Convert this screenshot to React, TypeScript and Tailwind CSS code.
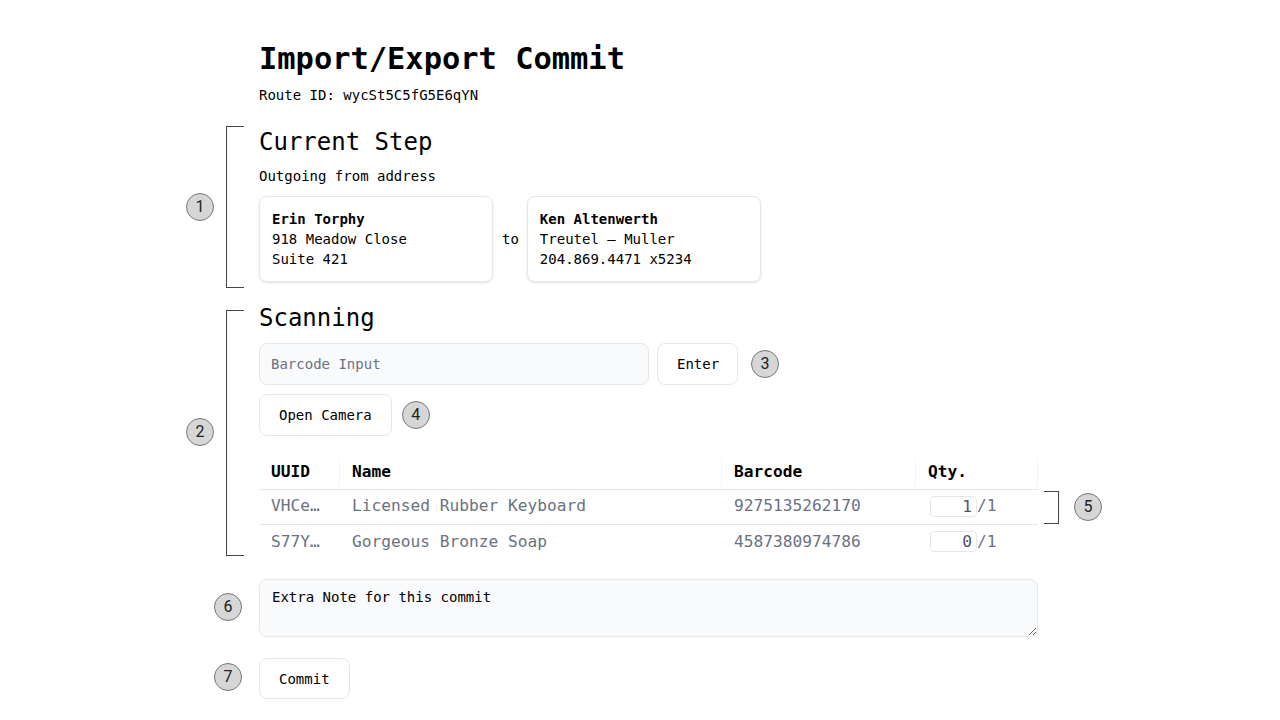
import React from "react";

const mono = { fontFamily: '"DejaVu Sans Mono", "Liberation Mono", monospace' };

const Badge = ({ n, className = "" }: { n: number; className?: string }) => (
  <div
    className={`shrink-0 w-[28px] h-[28px] rounded-full bg-[#d6d6d6] border border-[#777] flex items-center justify-center text-[16px] text-[#222] ${className}`}
    style={{ fontFamily: "Roboto, 'Liberation Sans', sans-serif" }}
  >
    {n}
  </div>
);

const Bracket = ({ className }: { className: string }) => (
  <div
    className={`absolute w-[18px] border-l-[1.5px] border-t-[1.5px] border-b-[1.5px] border-[#444] ${className}`}
  />
);

const rows = [
  { uuid: "VHCe…", name: "Licensed Rubber Keyboard", barcode: "9275135262170", qty: 1 },
  { uuid: "S77Y…", name: "Gorgeous Bronze Soap", barcode: "4587380974786", qty: 0 },
];

const cols = [
  { label: "UUID", w: "w-[81px]" },
  { label: "Name", w: "w-[382px]" },
  { label: "Barcode", w: "w-[194px]" },
  { label: "Qty.", w: "" },
];

const btn =
  "bg-white border border-gray-200 rounded-lg px-[19px] py-[10px] text-sm leading-5 text-black";

export default function App() {
  return (
    <div className="min-h-screen bg-white text-black pl-[259px] pt-[41px] pb-6" style={mono}>
      <div className="w-[780px]">
        <h1 className="text-[30.4px] leading-9 font-bold">Import/Export Commit</h1>
        <p className="mt-2 text-sm leading-5">Route ID: wycSt5C5fG5E6qYN</p>

        {/* current step */}
        <section className="relative mt-[21px]">
          <Bracket className="left-[-33px] top-0 h-[162px]" />
          <Badge n={1} className="absolute left-[-73px] top-[67px]" />
          <h2 className="text-2xl leading-8">Current Step</h2>
          <p className="mt-2 text-sm leading-5">Outgoing from address</p>
          <div className="mt-[10px] flex items-center">
            <div className="w-[234px] rounded-lg border border-gray-200 shadow-sm p-3 text-sm leading-5">
              <div className="font-bold">Erin Torphy</div>
              <div>918 Meadow Close</div>
              <div>Suite 421</div>
            </div>
            <span className="ml-[9px] mr-2 text-sm">to</span>
            <div className="w-[234px] rounded-lg border border-gray-200 shadow-sm p-3 text-sm leading-5">
              <div className="font-bold">Ken Altenwerth</div>
              <div>Treutel – Muller</div>
              <div>204.869.4471 x5234</div>
            </div>
          </div>
        </section>

        {/* scanning */}
        <section className="relative mt-5">
          <Bracket className="left-[-33px] top-[8px] h-[246px]" />
          <Badge n={2} className="absolute left-[-73px] top-[116px]" />
          <h2 className="text-2xl leading-8">Scanning</h2>
          <div className="mt-[9px] flex items-center">
            <input
              className="w-[390px] h-[42px] rounded-lg border border-gray-200 bg-gray-50 px-[11px] text-sm placeholder:text-gray-500 outline-none"
              placeholder="Barcode Input"
              style={mono}
            />
            <button className={`${btn} ml-2 w-[81px]`} style={mono}>Enter</button>
            <Badge n={3} className="ml-[13px]" />
          </div>
          <div className="mt-[9px] flex items-center gap-[10px]">
            <button className={btn} style={mono}>Open Camera</button>
            <Badge n={4} />
          </div>

          <div className="mt-[19px] flex items-start">
            <table className="w-[779px] shrink-0 border-collapse text-[16.2px]">
              <thead>
                <tr className="border-b border-gray-200 h-[34px]">
                  {cols.map((c) => (
                    <th key={c.label} className={`${c.w} text-left font-bold px-3 relative`}>
                      {c.label}
                      <span className="absolute right-0 top-[3px] bottom-[2px] w-px bg-gray-100" />
                    </th>
                  ))}
                </tr>
              </thead>
              <tbody className="text-gray-500">
                {rows.map((r, i) => (
                  <tr key={r.uuid} className={`h-[35px] ${i === 0 ? "border-b border-gray-200" : ""}`}>
                    <td className="px-3">{r.uuid}</td>
                    <td className="px-3">{r.name}</td>
                    <td className="px-3">{r.barcode}</td>
                    <td className="pl-[14px] pr-3">
                      <div className="flex items-center">
                        <span className="w-[47px] h-[21px] border border-gray-200 rounded text-right pr-[4px] leading-5 text-gray-600">
                          {r.qty}
                        </span>
                        <span>/1</span>
                      </div>
                    </td>
                  </tr>
                ))}
              </tbody>
            </table>
            <div className="shrink-0 mt-[36px] ml-[6px] w-[15px] h-[33px] border-r-[1.5px] border-t-[1.5px] border-b-[1.5px] border-[#444]" />
            <Badge n={5} className="mt-[38px] ml-[15px]" />
          </div>
        </section>

        {/* note */}
        <div className="relative mt-5">
          <Badge n={6} className="absolute left-[-45px] top-[14px]" />
          <textarea
            className="block w-[779px] h-[58px] rounded-lg border border-gray-200 bg-gray-50 px-3 py-[7px] text-sm leading-5 text-black placeholder:text-black outline-none"
            placeholder="Extra Note for this commit"
            style={mono}
          />
        </div>

        <div className="relative mt-[21px]">
          <Badge n={7} className="absolute left-[-45px] top-[5px]" />
          <button className={`${btn} h-[41px] py-0 px-[18px]`} style={mono}>Commit</button>
        </div>
      </div>
    </div>
  );
}
